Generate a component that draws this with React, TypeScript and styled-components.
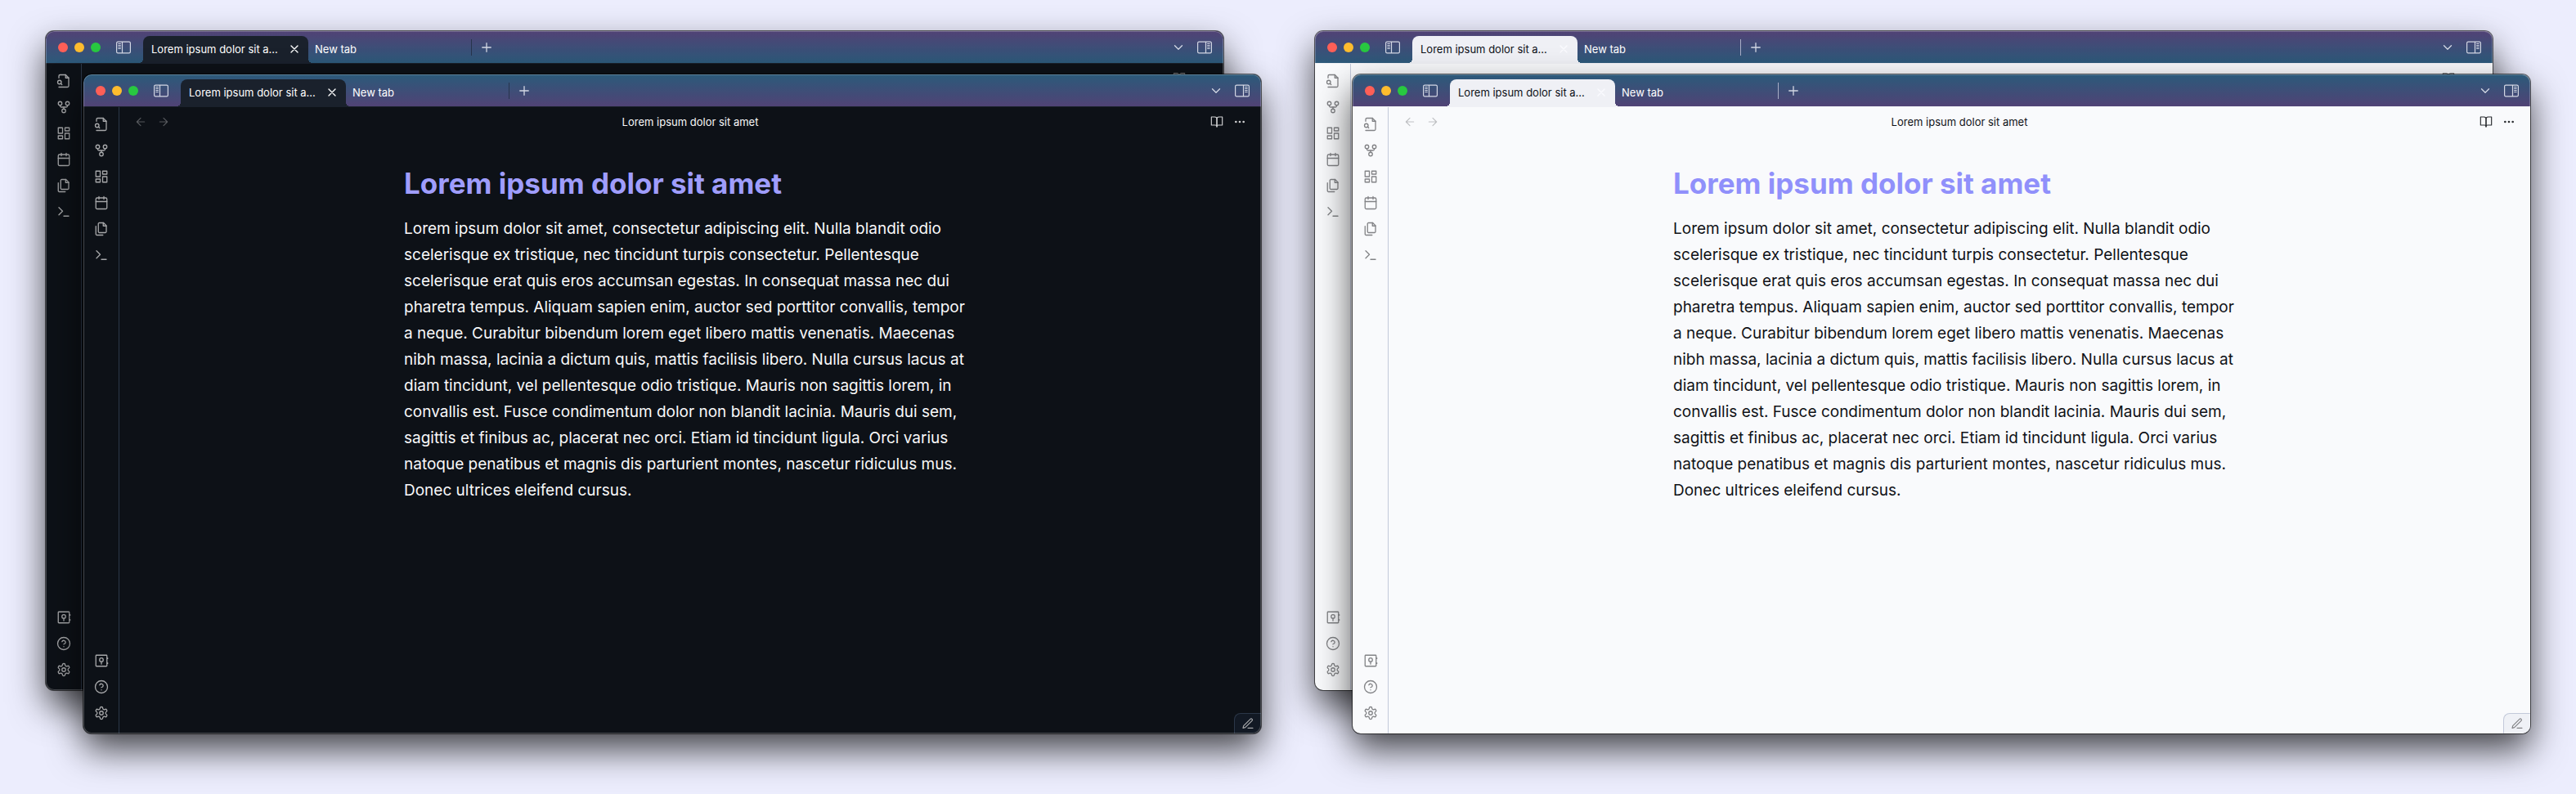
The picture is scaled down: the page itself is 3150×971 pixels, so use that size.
import React from 'react';
import styled, { createGlobalStyle, ThemeProvider, css } from 'styled-components';

type Palette = {
  surface: string;
  tab: string;
  tabText: string;
  close: string;
  separator: string;
  line: string;
  icon: string;
  faint: string;
  action: string;
  text: string;
  heading: string;
  status: string;
  rim: string;
};

declare module 'styled-components' {
  export interface DefaultTheme extends Palette {}
}

const dark: Palette = {
  surface: '#0d1117',
  tab: '#1a212c',
  tabText: '#ffffff',
  close: '#ffffff',
  separator: '#27344c',
  line: '#2b3748',
  icon: '#a6a7a9',
  faint: '#56595d',
  action: '#cfd0d1',
  text: '#f8f8f9',
  heading: '#9f9dfd',
  status: '#121924',
  rim: 'rgba(255, 255, 255, 0.24)',
};

const light: Palette = {
  surface: '#f9fafc',
  tab: '#eff0f5',
  tabText: '#0d1117',
  close: '#fbfbfe',
  separator: '#a9aec6',
  line: '#c3c9da',
  icon: '#828386',
  faint: '#bfc0c3',
  action: '#2b2d31',
  text: '#101217',
  heading: '#9090fb',
  status: '#eff1f6',
  rim: 'rgba(255, 255, 255, 0.24)',
};

const GlobalStyle = createGlobalStyle`
  *, *::before, *::after { box-sizing: border-box; }
  body {
    margin: 0;
    background: #ecedfd;
    font-family: Inter, "Liberation Sans", sans-serif;
  }
  button {
    margin: 0;
    padding: 0;
    border: 0;
    background: none;
    color: inherit;
    font: inherit;
    cursor: pointer;
  }
  svg { display: block; }
`;

const Page = styled.main`
  display: grid;
  grid-template-columns: 1fr 1fr;
  gap: 66px;
  min-height: 100vh;
  padding: 38px 56px 74px;
  overflow: hidden;
`;

const Stack = styled.section`
  display: grid;
  min-width: 0;
`;

const Frame = styled.article<{ $front: boolean }>`
  position: relative;
  grid-area: 1 / 1;
  display: flex;
  flex-direction: column;
  min-width: 0;
  margin: ${p => (p.$front ? '53px 0 0 46px' : '0 46px 53px 0')};
  border-radius: 10px;
  overflow: hidden;
  background: ${p => p.theme.surface};
  box-shadow: 0 0 0 1px rgba(0, 0, 0, 0.6), 0 20px 44px rgba(0, 0, 0, 0.7);

  &::after {
    content: '';
    position: absolute;
    inset: 0;
    border-radius: inherit;
    box-shadow: inset 0 0 0 1px ${p => p.theme.rim};
    pointer-events: none;
  }
`;

const TitleBar = styled.header<{ $front: boolean }>`
  display: flex;
  align-items: center;
  height: 40px;
  flex: none;
  padding: 0 14px 0 15px;
  color: #d3d7e4;
  background: linear-gradient(
    ${p => (p.$front ? '#2b5a7a, #514275' : '#514275, #2b5a7a')}
  );
  box-shadow: inset 0 -1px ${p => p.theme.tab};
`;

const Lights = styled.div`
  display: flex;
  gap: 8px;
  margin-right: 19px;
`;

const Light = styled.button<{ $color: string }>`
  width: 12px;
  height: 12px;
  border-radius: 50%;
  background: ${p => p.$color};
`;

const Tabs = styled.nav`
  display: flex;
  align-self: flex-end;
  height: 34px;
  margin-left: 15px;
`;

const flare = css`
  content: '';
  position: absolute;
  bottom: 1px;
  width: 5px;
  height: 5px;
`;

const Tab = styled.div<{ $active?: boolean }>`
  position: relative;
  display: flex;
  align-items: center;
  justify-content: space-between;
  width: ${p => (p.$active ? 202 : 199)}px;
  padding: ${p => (p.$active ? '0 9px 2px 10px' : '0 8px 2px')};
  border-radius: 8px 8px 0 0;
  color: ${p => (p.$active ? p.theme.tabText : '#ffffff')};
  font-size: 13px;
  line-height: 20px;

  ${p =>
    p.$active &&
    css`
      background: ${p.theme.tab};

      &::before {
        ${flare}
        right: 100%;
        background: radial-gradient(circle at 0 0, transparent 5px, ${p.theme.tab} 5px);
      }
      &::after {
        ${flare}
        left: 100%;
        background: radial-gradient(circle at 100% 0, transparent 5px, ${p.theme.tab} 5px);
      }
    `}
`;

const TabName = styled.button`
  white-space: nowrap;
`;

const TabClose = styled.button`
  color: ${p => p.theme.close};
`;

const Separator = styled.span`
  width: 1px;
  height: 20px;
  margin-right: 9px;
  background: ${p => p.theme.separator};
`;

const Corner = styled.div`
  display: flex;
  align-items: center;
  gap: 14px;
  margin-left: auto;
`;

const Body = styled.div`
  display: flex;
  flex: 1;
`;

const Ribbon = styled.aside`
  display: flex;
  flex-direction: column;
  align-items: center;
  flex: none;
  width: 44px;
  padding: 5px 0 9px;
  border-right: 1px solid ${p => p.theme.line};
  color: ${p => p.theme.icon};
`;

const RibbonButton = styled.button`
  display: grid;
  place-items: center;
  width: 32px;
  height: 32px;
`;

const Spacer = styled.div`
  flex: 1;
`;

const View = styled.div`
  flex: 1;
  min-width: 0;
`;

const ViewHeader = styled.div`
  display: grid;
  grid-template-columns: 1fr auto 1fr;
  align-items: center;
  height: 36px;
  padding: 0 18px;
  font-size: 13px;
  line-height: 20px;
  color: ${p => p.theme.text};
`;

const Actions = styled.div<{ $end?: boolean }>`
  display: flex;
  gap: 12px;
  justify-content: ${p => (p.$end ? 'flex-end' : 'flex-start')};
  color: ${p => (p.$end ? p.theme.action : p.theme.faint)};
`;

const Note = styled.div`
  max-width: 700px;
  margin: 36px auto 0;
`;

const Heading = styled.h1`
  margin: 0 0 19px;
  font-size: 35px;
  line-height: 42px;
  font-weight: 700;
  color: ${p => p.theme.heading};
`;

const Paragraph = styled.p`
  margin: 0;
  font-size: 19px;
  line-height: 32px;
  color: ${p => p.theme.text};
`;

const Status = styled.button`
  position: absolute;
  right: 0;
  bottom: 0;
  display: grid;
  place-items: center;
  width: 33px;
  height: 25px;
  border: solid ${p => p.theme.line};
  border-width: 1px 0 0 1px;
  border-radius: 8px 0 0 0;
  background: ${p => p.theme.status};
  color: ${p => p.theme.icon};
`;

const Glyph = ({ size = 18, stroke = 1.75, children }: { size?: number; stroke?: number; children: React.ReactNode }) => (
  <svg
    width={size}
    height={size}
    viewBox="0 0 24 24"
    fill="none"
    stroke="currentColor"
    strokeWidth={stroke}
    strokeLinecap="round"
    strokeLinejoin="round"
    aria-hidden="true"
  >
    {children}
  </svg>
);

const PanelGlyph = ({ right = false }: { right?: boolean }) => (
  <svg width="18" height="16" viewBox="0 0 18 16" fill="none" stroke="currentColor" aria-hidden="true">
    <g transform={right ? 'matrix(-1 0 0 1 18 0)' : undefined}>
      <rect x="0.6" y="1.1" width="16.8" height="13.8" rx="1.6" strokeWidth="1.2" />
      <path d="M7.5 1v14" strokeWidth="1.2" />
      <path d="M2.4 3.5h3.4M2.4 5.5h3.4M2.4 7.5h3.4M2.4 9.5h3.4" strokeWidth="1" />
    </g>
  </svg>
);

const ribbonTop = [
  {
    label: 'Open quick switcher',
    art: (
      <>
        <path d="M15 2v5h5" />
        <path d="M4 22h14a2 2 0 0 0 2-2V7l-5-5H6a2 2 0 0 0-2 2v3" />
        <circle cx="5" cy="14" r="3" />
        <path d="m9 18-1.9-1.9" />
      </>
    ),
  },
  {
    label: 'Open graph view',
    art: (
      <>
        <circle cx="12" cy="18" r="3" />
        <circle cx="6" cy="6" r="3" />
        <circle cx="18" cy="6" r="3" />
        <path d="M18 9v1a2 2 0 0 1-2 2H8a2 2 0 0 1-2-2V9" />
        <path d="M12 12v3" />
      </>
    ),
  },
  {
    label: 'Create new canvas',
    art: (
      <>
        <rect x="3" y="3" width="7" height="9" />
        <rect x="14" y="3" width="7" height="5" />
        <rect x="14" y="12" width="7" height="9" />
        <rect x="3" y="16" width="7" height="5" />
      </>
    ),
  },
  {
    label: "Open today's daily note",
    art: (
      <>
        <rect x="3" y="4" width="18" height="18" rx="2" />
        <path d="M16 2v4M8 2v4M3 10h18" />
      </>
    ),
  },
  {
    label: 'Insert template',
    art: (
      <>
        <path d="M15.5 2H8.6c-.4 0-.8.2-1.1.5-.3.3-.5.7-.5 1.1v12.8c0 .4.2.8.5 1.1.3.3.7.5 1.1.5h9.8c.4 0 .8-.2 1.1-.5.3-.3.5-.7.5-1.1V6.5L15.5 2z" />
        <path d="M3 7.6v12.8c0 .4.2.8.5 1.1.3.3.7.5 1.1.5h9.8" />
        <path d="M15 2v5h5" />
      </>
    ),
  },
  {
    label: 'Open command palette',
    art: (
      <>
        <path d="m4 17 6-6-6-6" />
        <path d="M12 19h8" />
      </>
    ),
  },
];

const ribbonBottom = [
  {
    label: 'Open another vault',
    art: (
      <>
        <rect x="3" y="3" width="18" height="18" rx="1" />
        <circle cx="12" cy="10.5" r="3" />
        <path d="M12 13.5v4M22.2 7.6v1M22.2 15.6v1" />
      </>
    ),
  },
  {
    label: 'Help',
    art: (
      <>
        <circle cx="12" cy="12" r="10" />
        <path d="M9.09 9a3 3 0 0 1 5.83 1c0 2-3 3-3 3" />
        <path d="M12 17h.01" />
      </>
    ),
  },
  {
    label: 'Settings',
    art: (
      <>
        <path d="M12.22 2h-.44a2 2 0 0 0-2 2v.18a2 2 0 0 1-1 1.73l-.43.25a2 2 0 0 1-2 0l-.15-.08a2 2 0 0 0-2.73.73l-.22.38a2 2 0 0 0 .73 2.73l.15.1a2 2 0 0 1 1 1.72v.51a2 2 0 0 1-1 1.74l-.15.09a2 2 0 0 0-.73 2.73l.22.38a2 2 0 0 0 2.73.73l.15-.08a2 2 0 0 1 2 0l.43.25a2 2 0 0 1 1 1.73V20a2 2 0 0 0 2 2h.44a2 2 0 0 0 2-2v-.18a2 2 0 0 1 1-1.73l.43-.25a2 2 0 0 1 2 0l.15.08a2 2 0 0 0 2.73-.73l.22-.39a2 2 0 0 0-.73-2.73l-.15-.08a2 2 0 0 1-1-1.74v-.5a2 2 0 0 1 1-1.74l.15-.09a2 2 0 0 0 .73-2.73l-.22-.38a2 2 0 0 0-2.73-.73l-.15.08a2 2 0 0 1-2 0l-.43-.25a2 2 0 0 1-1-1.73V4a2 2 0 0 0-2-2z" />
        <circle cx="12" cy="12" r="3" />
      </>
    ),
  },
];

const lights = [
  { label: 'Close window', color: '#ff5f57' },
  { label: 'Minimize window', color: '#febc2e' },
  { label: 'Zoom window', color: '#28c840' },
];

const title = 'Lorem ipsum dolor sit amet';

const body =
  'Lorem ipsum dolor sit amet, consectetur adipiscing elit. Nulla blandit odio scelerisque ex tristique, nec tincidunt turpis consectetur. Pellentesque scelerisque erat quis eros accumsan egestas. In consequat massa nec dui pharetra tempus. Aliquam sapien enim, auctor sed porttitor convallis, tempor a neque. Curabitur bibendum lorem eget libero mattis venenatis. Maecenas nibh massa, lacinia a dictum quis, mattis facilisis libero. Nulla cursus lacus at diam tincidunt, vel pellentesque odio tristique. Mauris non sagittis lorem, in convallis est. Fusce condimentum dolor non blandit lacinia. Mauris dui sem, sagittis et finibus ac, placerat nec orci. Etiam id tincidunt ligula. Orci varius natoque penatibus et magnis dis parturient montes, nascetur ridiculus mus. Donec ultrices eleifend cursus.';

function AppWindow({ front = false }: { front?: boolean }) {
  return (
    <Frame $front={front}>
      <TitleBar $front={front}>
        <Lights>
          {lights.map(l => (
            <Light key={l.label} $color={l.color} aria-label={l.label} />
          ))}
        </Lights>
        <button aria-label="Toggle left sidebar">
          <PanelGlyph />
        </button>
        <Tabs aria-label="Open tabs">
          <Tab $active>
            <TabName>Lorem ipsum dolor sit a...</TabName>
            <TabClose aria-label="Close tab">
              <Glyph size={16} stroke={2}>
                <path d="M18 6 6 18M6 6l12 12" />
              </Glyph>
            </TabClose>
          </Tab>
          <Tab>
            <TabName>New tab</TabName>
          </Tab>
        </Tabs>
        <Separator />
        <button aria-label="New tab">
          <Glyph>
            <path d="M5 12h14M12 5v14" />
          </Glyph>
        </button>
        <Corner>
          <button aria-label="Tab list">
            <Glyph>
              <path d="m6 9 6 6 6-6" />
            </Glyph>
          </button>
          <button aria-label="Toggle right sidebar">
            <PanelGlyph right />
          </button>
        </Corner>
      </TitleBar>
      <Body>
        <Ribbon>
          {ribbonTop.map(item => (
            <RibbonButton key={item.label} aria-label={item.label}>
              <Glyph>{item.art}</Glyph>
            </RibbonButton>
          ))}
          <Spacer />
          {ribbonBottom.map(item => (
            <RibbonButton key={item.label} aria-label={item.label}>
              <Glyph>{item.art}</Glyph>
            </RibbonButton>
          ))}
        </Ribbon>
        <View>
          <ViewHeader>
            <Actions>
              <button aria-label="Back">
                <Glyph size={16}>
                  <path d="M19 12H5M12 19l-7-7 7-7" />
                </Glyph>
              </button>
              <button aria-label="Forward">
                <Glyph size={16}>
                  <path d="M5 12h14M12 5l7 7-7 7" />
                </Glyph>
              </button>
            </Actions>
            <span>{front && title}</span>
            <Actions $end>
              <button aria-label="Reading view">
                <Glyph size={16}>
                  <path d="M2 3h6a4 4 0 0 1 4 4v14a3 3 0 0 0-3-3H2z" />
                  <path d="M22 3h-6a4 4 0 0 0-4 4v14a3 3 0 0 1 3-3h7z" />
                </Glyph>
              </button>
              <button aria-label="More options">
                <Glyph size={16} stroke={2}>
                  <circle cx="12" cy="12" r="1" />
                  <circle cx="19" cy="12" r="1" />
                  <circle cx="5" cy="12" r="1" />
                </Glyph>
              </button>
            </Actions>
          </ViewHeader>
          {front && (
            <Note>
              <Heading>{title}</Heading>
              <Paragraph>{body}</Paragraph>
            </Note>
          )}
        </View>
      </Body>
      {front && (
        <Status aria-label="Editing mode">
          <Glyph size={16}>
            <path d="M12 20h9" />
            <path d="M16.5 3.5a2.12 2.12 0 0 1 3 3L7 19l-4 1 1-4Z" />
          </Glyph>
        </Status>
      )}
    </Frame>
  );
}

export default function App() {
  return (
    <>
      <GlobalStyle />
      <Page>
        {[dark, light].map((palette, i) => (
          <ThemeProvider key={i} theme={palette}>
            <Stack>
              <AppWindow />
              <AppWindow front />
            </Stack>
          </ThemeProvider>
        ))}
      </Page>
    </>
  );
}
